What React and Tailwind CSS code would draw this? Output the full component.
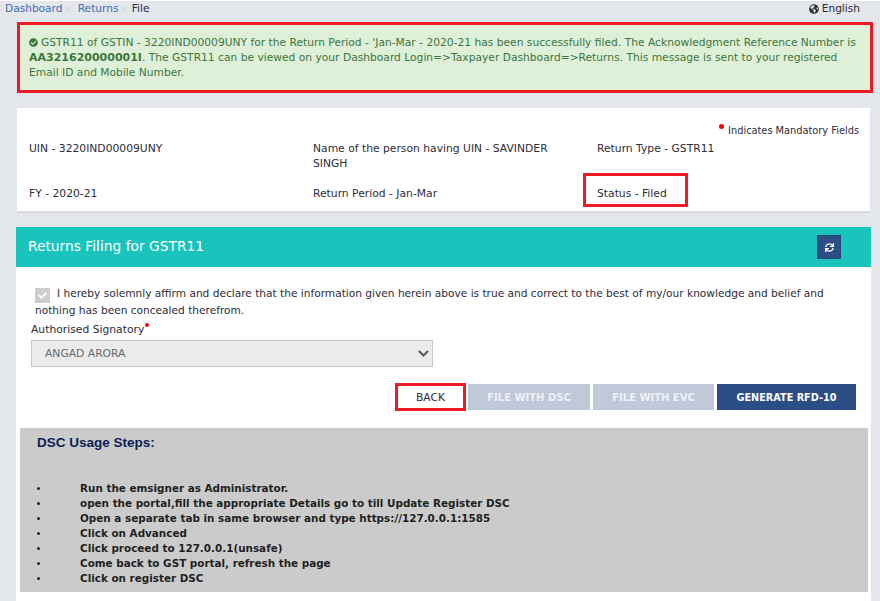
import { FaCheckCircle, FaGlobeAmericas, FaSync, FaCheck } from "react-icons/fa";

const steps = [
  "Run the emsigner as Administrator.",
  "open the portal,fill the appropriate Details go to till Update Register DSC",
  "Open a separate tab in same browser and type https://127.0.0.1:1585",
  "Click on Advanced",
  "Click proceed to 127.0.0.1(unsafe)",
  "Come back to GST portal, refresh the page",
  "Click on register DSC",
];

function Crumb({ children }) {
  return (
    <>
      <span className="text-[#3f6cb5]">{children}</span>
      <span className="ml-[3px] mr-[8px] text-[#c4c8cc]">›</span>
    </>
  );
}

export default function App() {
  return (
    <div className="h-[601px] w-[880px] overflow-hidden border-t border-t-white bg-[#e3e6ea] font-['DejaVu_Sans',Verdana,sans-serif] text-[10.75px] leading-[15px] text-[#2c2c3a]">
      <div className="flex h-[21px] items-start justify-between pl-[5px] pr-[20px] text-[10.6px]">
        <div className="flex items-center">
          <Crumb>Dashboard</Crumb>
          <Crumb>Returns</Crumb>
          <span className="ml-[-2px]">File</span>
        </div>
        <div className="flex items-center gap-[3px]">
          <FaGlobeAmericas className="h-[10px] w-[10px] text-[#333]" />
          <span>English</span>
        </div>
      </div>

      <div className="ml-[17px] mr-[7px] h-[71px] border-[3px] border-[#ed1c24] bg-[#dff0d8] px-[9px] pt-[10px] text-[10.7px] text-[#3c763d]">
        <FaCheckCircle className="mr-[3px] inline h-[9px] w-[9px] align-[-0.5px]" />
        GSTR11 of GSTIN - 3220IND00009UNY for the Return Period - 'Jan-Mar - 2020-21 has been successfully filed. The Acknowledgment Reference Number is{" "}
        <b className="text-[11px]">AA321620000001I</b>. The GSTR11 can be viewed on your Dashboard Login=&gt;Taxpayer Dashboard=&gt;Returns. This message is sent to your registered Email ID and Mobile Number.
      </div>

      <div className="ml-[17px] mr-[10px] mt-[15px] h-[105px] border-b-2 border-b-[#d9dbde] bg-white px-[12px] pt-[15px]">
        <div className="flex justify-end text-[9.8px]">
          <span className="mr-[4px] mt-[1px] h-[5px] w-[5px] rounded-full bg-[#f00]" />
          <span className="mr-[-1px]">Indicates Mandatory Fields</span>
        </div>
        <div className="mt-[3px] grid grid-cols-[284px_284px_1fr]">
          <div>UIN - 3220IND00009UNY</div>
          <div className="pr-[30px]">Name of the person having UIN - SAVINDER SINGH</div>
          <div>Return Type - GSTR11</div>
          <div className="mt-[15px]">FY - 2020-21</div>
          <div className="mt-[15px]">Return Period - Jan-Mar</div>
          <div className="relative mt-[15px]">
            Status - Filed
            <span className="absolute left-[-14px] top-[-13px] h-[34px] w-[105px] border-[3px] border-[#ed1c24]" />
          </div>
        </div>
      </div>

      <div className="ml-[16px] mr-[9px] mt-[14px] flex h-[40px] items-center justify-between bg-[#19c4bc] pl-[12px] pr-[30px]">
        <span className="mt-[-2px] text-[13.8px] text-white">Returns Filing for GSTR11</span>
        <span className="flex h-[24px] w-[24px] items-center justify-center border border-[#24457d] bg-[#2c4e86]">
          <FaSync className="h-[9px] w-[9px] text-white" />
        </span>
      </div>

      <div className="ml-[16px] mr-[9px] h-[340px] bg-white px-[4px]">
        <div className="ml-[15px] mr-[30px] pt-[18px] text-[10.6px] leading-[17px]">
          <span className="mr-[7px] inline-flex h-[15px] w-[15px] translate-y-[3px] items-center justify-center bg-[#cdcdcd] text-white">
            <FaCheck className="h-[9px] w-[9px]" />
          </span>
          I hereby solemnly affirm and declare that the information given herein above is true and correct to the best of my/our knowledge and belief and nothing has been concealed therefrom.
        </div>
        <div className="ml-[11px] mt-[3px] flex items-start">
          Authorised Signatory<span className="ml-[1px] mt-[1px] h-[4px] w-[4px] rounded-full bg-[#f00]" />
        </div>
        <div className="ml-[11px] mt-[3px] flex h-[27px] w-[402px] items-center justify-between border border-[#c8c8c8] bg-[#ebebeb] pl-[13px] pr-[3px] text-[#6a6a6a]">
          ANGAD ARORA
          <svg width="11" height="7" viewBox="0 0 11 7" fill="none" stroke="#555" strokeWidth="2"><path d="M1 1l4.500 4.500L10 1" /></svg>
        </div>
        <div className="mt-[16px] flex items-center justify-end gap-[3px] pr-[11px]">
          <span className="mr-[-1px] flex h-[28px] w-[71px] items-center justify-center border-[3px] border-[#ed1c24]">BACK</span>
          <span className="flex h-[26px] w-[122px] items-center justify-center bg-[#bfc9da] text-[10px] font-bold text-[#eef1f5]">FILE WITH DSC</span>
          <span className="flex h-[26px] w-[121px] items-center justify-center bg-[#bfc9da] text-[10px] font-bold text-[#eef1f5]">FILE WITH EVC</span>
          <span className="flex h-[26px] w-[139px] items-center justify-center bg-[#2c4e86] text-[9.7px] font-bold text-white">GENERATE RFD-10</span>
        </div>
        <div className="mt-[17px] h-[164px] w-[848px] bg-[#cbcbcb] pl-[17px] pt-[7px] text-[10.4px] font-bold">
          <div className="font-['Liberation_Sans',Arial,sans-serif] text-[13.5px] leading-[16px] text-[#0b1f55]">DSC Usage Steps:</div>
          <ul className="mt-[30px] text-[#1f1f1f]">
            {steps.map((s) => (
              <li key={s} className="flex h-[15px] items-center">
                <span className="h-[3px] w-[3px] rounded-full bg-[#222]" />
                <span className="ml-[40px]">{s}</span>
              </li>
            ))}
          </ul>
        </div>
      </div>
    </div>
  );
}
